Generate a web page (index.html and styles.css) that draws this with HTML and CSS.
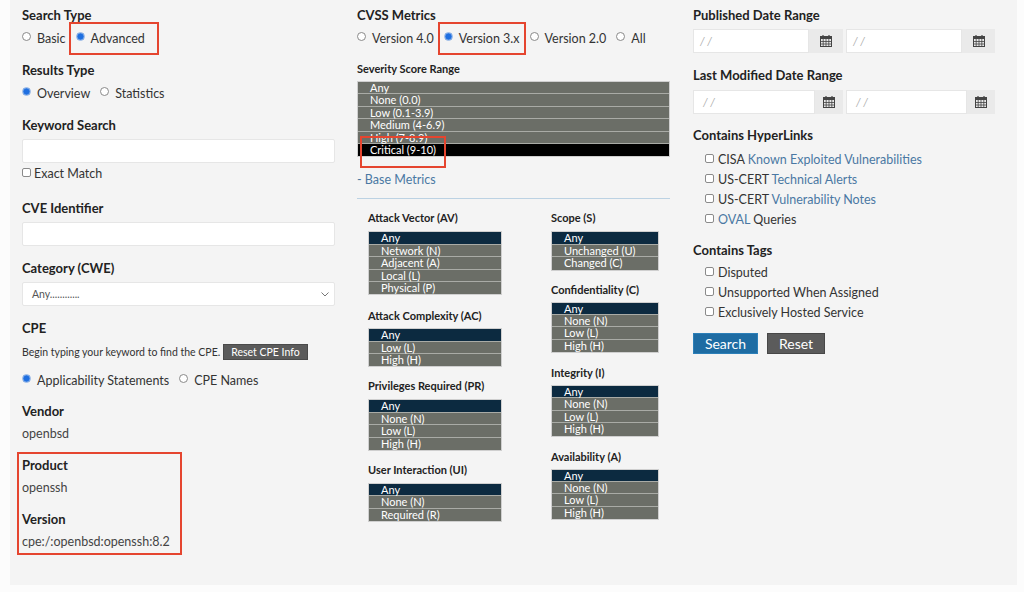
FILE: index.html
```html
<!DOCTYPE html>
<html>
<head>
<meta charset="utf-8">
<link rel="stylesheet" href="styles.css">
</head>
<body>
<div class="panel">
  <div class="col col1">
    <div class="lbl">Search Type</div>
    <div class="radios">
      <label class="opt"><input type="radio" name="st">Basic</label>
      <label class="opt hl-adv"><input type="radio" name="st" checked>Advanced</label>
    </div>
    <div class="lbl mt14">Results Type</div>
    <div class="radios">
      <label class="opt"><input type="radio" name="rt" checked>Overview</label>
      <label class="opt"><input type="radio" name="rt">Statistics</label>
    </div>
    <div class="lbl mt14">Keyword Search</div>
    <div class="field"></div>
    <label class="chk exact"><input type="checkbox">Exact Match</label>
    <div class="lbl mt19">CVE Identifier</div>
    <div class="field"></div>
    <div class="lbl mt14">Category (CWE)</div>
    <div class="field select"><span>Any............</span>
      <svg class="chev" width="8" height="5" viewBox="0 0 8 5"><path d="M0.5 0.5 L4 4 L7.5 0.5" fill="none" stroke="#777" stroke-width="1"/></svg>
    </div>
    <div class="lbl mt14">CPE</div>
    <div class="help"><span>Begin typing your keyword to find the CPE.</span><span class="btn-small">Reset CPE Info</span></div>
    <div class="radios cpe-radios">
      <label class="opt"><input type="radio" name="cp" checked>Applicability Statements</label>
      <label class="opt"><input type="radio" name="cp">CPE Names</label>
    </div>
    <div class="lbl mt13">Vendor</div>
    <div class="val">openbsd</div>
    <div class="redbox">
      <div class="lbl">Product</div>
      <div class="val">openssh</div>
      <div class="lbl mt15">Version</div>
      <div class="val">cpe:/:openbsd:openssh:8.2</div>
    </div>
  </div>

  <div class="col col2">
    <div class="lbl">CVSS Metrics</div>
    <div class="radios">
      <label class="opt"><input type="radio" name="cv">Version 4.0</label>
      <label class="opt hl-v3"><input type="radio" name="cv" checked>Version 3.x</label>
      <label class="opt"><input type="radio" name="cv">Version 2.0</label>
      <label class="opt"><input type="radio" name="cv">All</label>
    </div>
    <div class="sublbl sev-lbl">Severity Score Range</div>
    <div class="sevwrap">
      <div class="list sev">
        <div class="row">Any</div>
        <div class="row">None (0.0)</div>
        <div class="row">Low (0.1-3.9)</div>
        <div class="row">Medium (4-6.9)</div>
        <div class="row">High (7-8.9)</div>
        <div class="row crit">Critical (9-10)</div>
      </div>
      <div class="redmark"></div>
    </div>
    <a class="link base">- Base Metrics</a>
    <div class="rule"></div>
    <div class="metrics">
      <div class="mcol left">
        <div class="sublbl first">Attack Vector (AV)</div>
        <div class="list sm">
          <div class="row sel">Any</div>
          <div class="row">Network (N)</div>
          <div class="row">Adjacent (A)</div>
          <div class="row">Local (L)</div>
          <div class="row">Physical (P)</div>
        </div>
        <div class="sublbl mt14">Attack Complexity (AC)</div>
        <div class="list sm m5">
          <div class="row sel">Any</div>
          <div class="row">Low (L)</div>
          <div class="row">High (H)</div>
        </div>
        <div class="sublbl mt12">Privileges Required (PR)</div>
        <div class="list sm">
          <div class="row sel">Any</div>
          <div class="row">None (N)</div>
          <div class="row">Low (L)</div>
          <div class="row">High (H)</div>
        </div>
        <div class="sublbl mt12">User Interaction (UI)</div>
        <div class="list sm">
          <div class="row sel">Any</div>
          <div class="row">None (N)</div>
          <div class="row">Required (R)</div>
        </div>
      </div>
      <div class="mcol right">
        <div class="sublbl first">Scope (S)</div>
        <div class="list sm">
          <div class="row sel">Any</div>
          <div class="row">Unchanged (U)</div>
          <div class="row">Changed (C)</div>
        </div>
        <div class="sublbl mt12">Confidentiality (C)</div>
        <div class="list sm m5">
          <div class="row sel">Any</div>
          <div class="row">None (N)</div>
          <div class="row">Low (L)</div>
          <div class="row">High (H)</div>
        </div>
        <div class="sublbl mt13">Integrity (I)</div>
        <div class="list sm m5">
          <div class="row sel">Any</div>
          <div class="row">None (N)</div>
          <div class="row">Low (L)</div>
          <div class="row">High (H)</div>
        </div>
        <div class="sublbl mt13">Availability (A)</div>
        <div class="list sm m5">
          <div class="row sel">Any</div>
          <div class="row">None (N)</div>
          <div class="row">Low (L)</div>
          <div class="row">High (H)</div>
        </div>
      </div>
    </div>
  </div>

  <div class="col col3">
    <div class="lbl">Published Date Range</div>
    <div class="dates">
      <div class="dgroup"><div class="dinput">/ /</div><div class="addon"><svg width="12" height="12" viewBox="0 0 12 12"><rect x="0.5" y="1.5" width="11" height="10" fill="none" stroke="#444"/><rect x="0.5" y="1.5" width="11" height="2.5" fill="#444"/><path d="M3 0v3M9 0v3" stroke="#444" stroke-width="1.2"/><path d="M0.5 6.5h11M0.5 9h11M3.2 4v7.5M6 4v7.5M8.8 4v7.5" stroke="#444" stroke-width="0.8"/></svg></div></div>
      <div class="dgroup"><div class="dinput">/ /</div><div class="addon"><svg width="12" height="12" viewBox="0 0 12 12"><rect x="0.5" y="1.5" width="11" height="10" fill="none" stroke="#444"/><rect x="0.5" y="1.5" width="11" height="2.5" fill="#444"/><path d="M3 0v3M9 0v3" stroke="#444" stroke-width="1.2"/><path d="M0.5 6.5h11M0.5 9h11M3.2 4v7.5M6 4v7.5M8.8 4v7.5" stroke="#444" stroke-width="0.8"/></svg></div></div>
    </div>
    <div class="lbl mt14">Last Modified Date Range</div>
    <div class="dates d2">
      <div class="dgroup"><div class="dinput">/ /</div><div class="addon"><svg width="12" height="12" viewBox="0 0 12 12"><rect x="0.5" y="1.5" width="11" height="10" fill="none" stroke="#444"/><rect x="0.5" y="1.5" width="11" height="2.5" fill="#444"/><path d="M3 0v3M9 0v3" stroke="#444" stroke-width="1.2"/><path d="M0.5 6.5h11M0.5 9h11M3.2 4v7.5M6 4v7.5M8.8 4v7.5" stroke="#444" stroke-width="0.8"/></svg></div></div>
      <div class="dgroup"><div class="dinput">/ /</div><div class="addon"><svg width="12" height="12" viewBox="0 0 12 12"><rect x="0.5" y="1.5" width="11" height="10" fill="none" stroke="#444"/><rect x="0.5" y="1.5" width="11" height="2.5" fill="#444"/><path d="M3 0v3M9 0v3" stroke="#444" stroke-width="1.2"/><path d="M0.5 6.5h11M0.5 9h11M3.2 4v7.5M6 4v7.5M8.8 4v7.5" stroke="#444" stroke-width="0.8"/></svg></div></div>
    </div>
    <div class="lbl mt13">Contains HyperLinks</div>
    <div class="checks">
      <label class="chk"><input type="checkbox"><span>CISA <a class="link">Known Exploited Vulnerabilities</a></span></label>
      <label class="chk"><input type="checkbox"><span>US-CERT <a class="link">Technical Alerts</a></span></label>
      <label class="chk"><input type="checkbox"><span>US-CERT <a class="link">Vulnerability Notes</a></span></label>
      <label class="chk"><input type="checkbox"><span><a class="link">OVAL</a> Queries</span></label>
    </div>
    <div class="lbl mt13">Contains Tags</div>
    <div class="checks tags">
      <label class="chk"><input type="checkbox">Disputed</label>
      <label class="chk"><input type="checkbox">Unsupported When Assigned</label>
      <label class="chk"><input type="checkbox">Exclusively Hosted Service</label>
    </div>
    <div class="buttons">
      <span class="btn search">Search</span>
      <span class="btn reset">Reset</span>
    </div>
  </div>
</div>
</body>
</html>
```

FILE: styles.css
```css
* { box-sizing: border-box; }
body {
  margin: 0;
  background: #fcfcfc;
  font-family: "Lato", "Liberation Sans", sans-serif;
  color: #333;
}
.panel {
  margin-left: 10px;
  width: 1007px;
  height: 585px;
  background: #f4f4f4;
  padding: 7px 0 0 12px;
  display: grid;
  grid-template-columns: 313px 313px 302px;
  column-gap: 22px;
}
.col { display: flex; flex-direction: column; align-items: flex-start; }
.col3 { margin-left: 1px; }

.lbl { font-size: 13px; font-weight: 700; line-height: 16px; color: #222; }
.mt12 { margin-top: 12px; }
.mt13 { margin-top: 13px; }
.mt14 { margin-top: 14px; }
.mt15 { margin-top: 15px; }
.mt19 { margin-top: 19px; }

.radios { display: flex; gap: 10px; margin-top: 5px; height: 20px; align-items: center; }
.opt { display: flex; align-items: center; font-size: 12.5px; color: #333; white-space: nowrap; position: relative; }
.opt input {
  appearance: none; -webkit-appearance: none;
  width: 9px; height: 9px; margin: 0 6px 3px 0;
  border: 1px solid #8a8a8a; border-radius: 50%; background: #fff;
}
.opt input:checked {
  border-color: #8fb3e6;
  background: radial-gradient(circle, #1f6fe0 0 2.6px, #5b95e6 3.3px);
}
.hl-adv::before {
  content: ""; position: absolute; left: -7px; top: -9px; width: 86px; height: 29px;
  border: 2px solid #e5452f;
}
.hl-v3::before {
  content: ""; position: absolute; left: -6px; top: -9px; width: 84px; height: 29px;
  border: 2px solid #e5452f;
}

.field {
  width: 313px; height: 24px; margin-top: 6px;
  background: #fff; border: 1px solid #e6e6e6; border-radius: 2px;
}
.select { display: flex; align-items: center; justify-content: space-between; padding: 0 5px 0 9px; font-size: 10.5px; color: #555; }
.chev { margin-top: 1px; }

.chk { display: flex; align-items: center; font-size: 12.5px; color: #333; white-space: nowrap; }
.chk input {
  appearance: none; -webkit-appearance: none;
  width: 9px; height: 9px; margin: 0 4px 1px 0;
  border: 1px solid #8a8a8a; border-radius: 2px; background: #fff;
}
.exact { margin-top: 2px; height: 16px; }
.exact input { margin-right: 3px; }

.help { margin-top: 8px; font-size: 10.5px; line-height: 16px; color: #333; display: flex; align-items: center; white-space: nowrap; gap: 3px; }
.btn-small { background: #5b5b5b; color: #fff; padding: 0 7px; height: 16px; border: 1px solid #4a4a4a; font-size: 10.5px; display: inline-block; line-height: 14px; }
.cpe-radios { margin-top: 10px; }

.val { font-size: 12.5px; color: #444; line-height: 16px; margin-top: 7px; }
.redbox {
  margin: 10px 0 0 -5px; width: 165px; padding: 3px 0 3px 3px;
  border: 2px solid #e5452f;
}

.sublbl { font-size: 11px; font-weight: 700; line-height: 14px; color: #222; }
.sev-lbl { margin-top: 14px; }
.sevwrap { position: relative; margin-top: 5px; }
.list { border: 1px solid #cfcfcf; background: #6b6e67; }
.row { color: #fff; font-size: 11px; line-height: 11.4px; height: 12.4px; border-bottom: 1px solid #a9aba6; white-space: nowrap; }
.row:last-child { border-bottom: none; }
.sev { width: 313px; }
.sev .row { padding-left: 12px; }
.sev .crit { background: #000; }
.redmark {
  position: absolute; left: 3px; top: 55px; width: 86px; height: 32px;
  border: 2px solid #e5452f;
}
.link { color: #4a78a3; text-decoration: none; }
.base { font-size: 12.5px; line-height: 16px; margin-top: 15px; }
.rule { width: 313px; height: 1px; background: #bcd2e3; margin-top: 10px; }

.metrics { display: flex; }
.mcol { display: flex; flex-direction: column; align-items: flex-start; }
.left { margin-left: 11px; width: 183px; }
.right { width: 110px; }
.sublbl.first { margin-top: 12px; }
.list.sm { margin-top: 6px; }
.list.sm.m5 { margin-top: 5px; }
.left .list.sm { width: 134px; }
.right .list.sm { width: 108px; }
.sm .row { padding-left: 12px; }
.sm .row.sel { background: #0c2a40; }

.dates { display: flex; gap: 3px; margin-top: 6px; }
.dates.d2 { margin-top: 7px; }
.dgroup { display: flex; height: 24px; width: 150px; }
.dgroup + .dgroup { width: 149px; }
.dinput { flex: 1; background: #fff; border: 1px solid #e6e6e6; font-size: 11px; color: #aaa; font-style: italic; padding-left: 6px; line-height: 22px; }
.addon { width: 34px; background: #eaeaea; display: flex; align-items: center; justify-content: center; }
.dgroup + .dgroup .addon { width: 33px; }
.d2 .addon, .d2 .dgroup + .dgroup .addon { width: 28px; }
.d2 .dinput { padding-left: 9px; }

.checks { margin-top: 6px; margin-left: 12px; display: flex; flex-direction: column; }
.checks .chk { height: 20px; }
.checks.tags { margin-top: 4px; }

.buttons { display: flex; gap: 9px; margin-top: 11px; }
.btn { height: 21px; color: #fff; font-size: 14px; display: flex; align-items: center; justify-content: center; }
.search { width: 65px; background: #1e6ca3; border: 1px solid #2c7fb8; }
.reset { width: 58px; background: #5b5b5b; border: 1px solid #474747; }
```
